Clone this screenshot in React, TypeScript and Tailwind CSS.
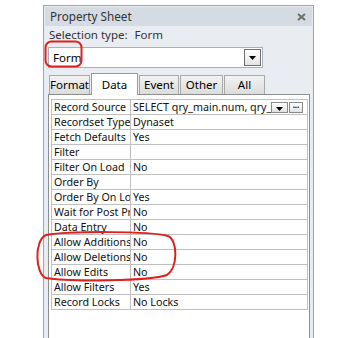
import React from "react";

const rows: [string, string][] = [
  ["Record Source", ""],
  ["Recordset Type", "Dynaset"],
  ["Fetch Defaults", "Yes"],
  ["Filter", ""],
  ["Filter On Load", "No"],
  ["Order By", ""],
  ["Order By On Load", "Yes"],
  ["Wait for Post Processing", "No"],
  ["Data Entry", "No"],
  ["Allow Additions", "No"],
  ["Allow Deletions", "No"],
  ["Allow Edits", "No"],
  ["Allow Filters", "Yes"],
  ["Record Locks", "No Locks"],
];

const tabs = [
  { name: "Format", w: "w-[41px]" },
  { name: "Data", w: "w-[47px]" },
  { name: "Event", w: "w-[40px]" },
  { name: "Other", w: "w-[43px]" },
  { name: "All", w: "w-[41px]" },
];

function DownArrow() {
  return (
    <svg width="7" height="4" viewBox="0 0 7 4">
      <path d="M0 0 H7 L3.5 4 Z" fill="#000" />
    </svg>
  );
}

export default function App() {
  return (
    <div
      className="relative w-[359px] h-[338px] bg-white overflow-hidden text-[10.7px] text-black"
      style={{ fontFamily: '"Noto Sans", "Open Sans", sans-serif' }}
    >
      <div className="ml-[43px] mt-[5px] w-[271px] h-[333px] border border-b-0 border-[#a3a3a3] bg-[#e9ecf0] flex flex-col">
        {/* title bar */}
        <div className="h-[19px] bg-[#d5dbe2] flex items-center justify-between pl-[5px] pr-[6px] mt-[1px] mx-[1px]">
          <span className="text-[11.7px] text-[#333] leading-none">Property Sheet</span>
          <svg width="9" height="8" viewBox="0 0 9 8">
            <path d="M1 1 L8 7 M8 1 L1 7" stroke="#6e6e6e" strokeWidth="2" />
          </svg>
        </div>
        {/* selection type */}
        <div className="h-[15px] flex items-center pl-[5px] mt-[1px] text-[#333] text-[11.5px] leading-none">
          <span>Selection type:</span>
          <span className="ml-[7px]">Form</span>
        </div>
        {/* dropdown */}
        <div className="mt-[5px] ml-[4px] w-[215px] h-[21px] bg-white border border-[#a9b0b8] flex items-center justify-between pl-[4px] pr-[1px]">
          <span className="text-[11.5px] leading-none">Form</span>
          <div className="w-[17px] h-[17px] border border-[#6f6f6f] bg-gradient-to-b from-[#ffffff] to-[#e4e4e4] flex items-center justify-center">
            <DownArrow />
          </div>
        </div>
        {/* tabs */}
        <div className="mt-[5px] ml-[5px] flex items-end h-[21px] relative z-10 gap-[1px]">
          {tabs.map((t) =>
            t.name === "Data" ? (
              <div
                key={t.name}
                className={`${t.w} h-[22px] -mb-[1px] bg-white border border-b-0 border-[#9a9a9a] flex items-start justify-center pt-[2px] text-[11.5px]`}
              >
                {t.name}
              </div>
            ) : (
              <div
                key={t.name}
                className={`${t.w} h-[19px] bg-gradient-to-b from-[#f2f2f2] to-[#dcdcdc] border border-b-0 border-[#a9a9a9] flex items-center justify-center text-[11.5px]`}
              >
                {t.name}
              </div>
            )
          )}
        </div>
        {/* content */}
        <div className="ml-[4px] w-[262px] flex-1 bg-white border border-b-0 border-[#8d8d8d] pt-[4px] pl-[2px]">
          <div className="w-[257px] border border-b-0 border-[#c0c0c0]">
            {rows.map(([label, value], i) => (
              <div key={i} className="h-[15px] flex border-b border-[#c0c0c0]">
                <div className="w-[79px] shrink-0 border-r border-[#c0c0c0] pl-[2px] overflow-hidden whitespace-nowrap leading-[14px] text-[#111]">
                  {label}
                </div>
                {i === 0 ? (
                  <div className="flex-1 flex items-center overflow-hidden">
                    <div className="w-[140px] overflow-hidden whitespace-nowrap pl-[2px] leading-[14px] text-[#111]">
                      SELECT qry_main.num, qry_main.name
                    </div>
                    <div className="w-[17px] h-[11px] border border-[#8a8a8a] bg-gradient-to-b from-white to-[#e2e2e2] flex items-end justify-center pb-[1px]">
                      <DownArrow />
                    </div>
                    <div className="ml-[1px] w-[14px] h-[11px] border border-[#8a8a8a] bg-gradient-to-b from-white to-[#e2e2e2] flex items-center justify-center text-[8px] font-bold leading-none">
                      ···
                    </div>
                  </div>
                ) : (
                  <div className="flex-1 pl-[2px] overflow-hidden whitespace-nowrap leading-[14px] text-[#111]">
                    {value}
                  </div>
                )}
              </div>
            ))}
          </div>
        </div>
      </div>
      {/* red annotations */}
      <svg className="absolute left-0 top-0 pointer-events-none" width="359" height="338">
        <rect x="45.5" y="41.5" width="36" height="25" rx="6" fill="none" stroke="#e0201f" strokeWidth="2" />
        <path
          d="M46 235 C 70 231, 150 231, 168 236 C 178 240, 178 268, 167 275 C 150 281, 70 282, 46 278 C 35 274, 34 240, 46 235 Z"
          fill="none"
          stroke="#e0201f"
          strokeWidth="2"
        />
      </svg>
    </div>
  );
}
